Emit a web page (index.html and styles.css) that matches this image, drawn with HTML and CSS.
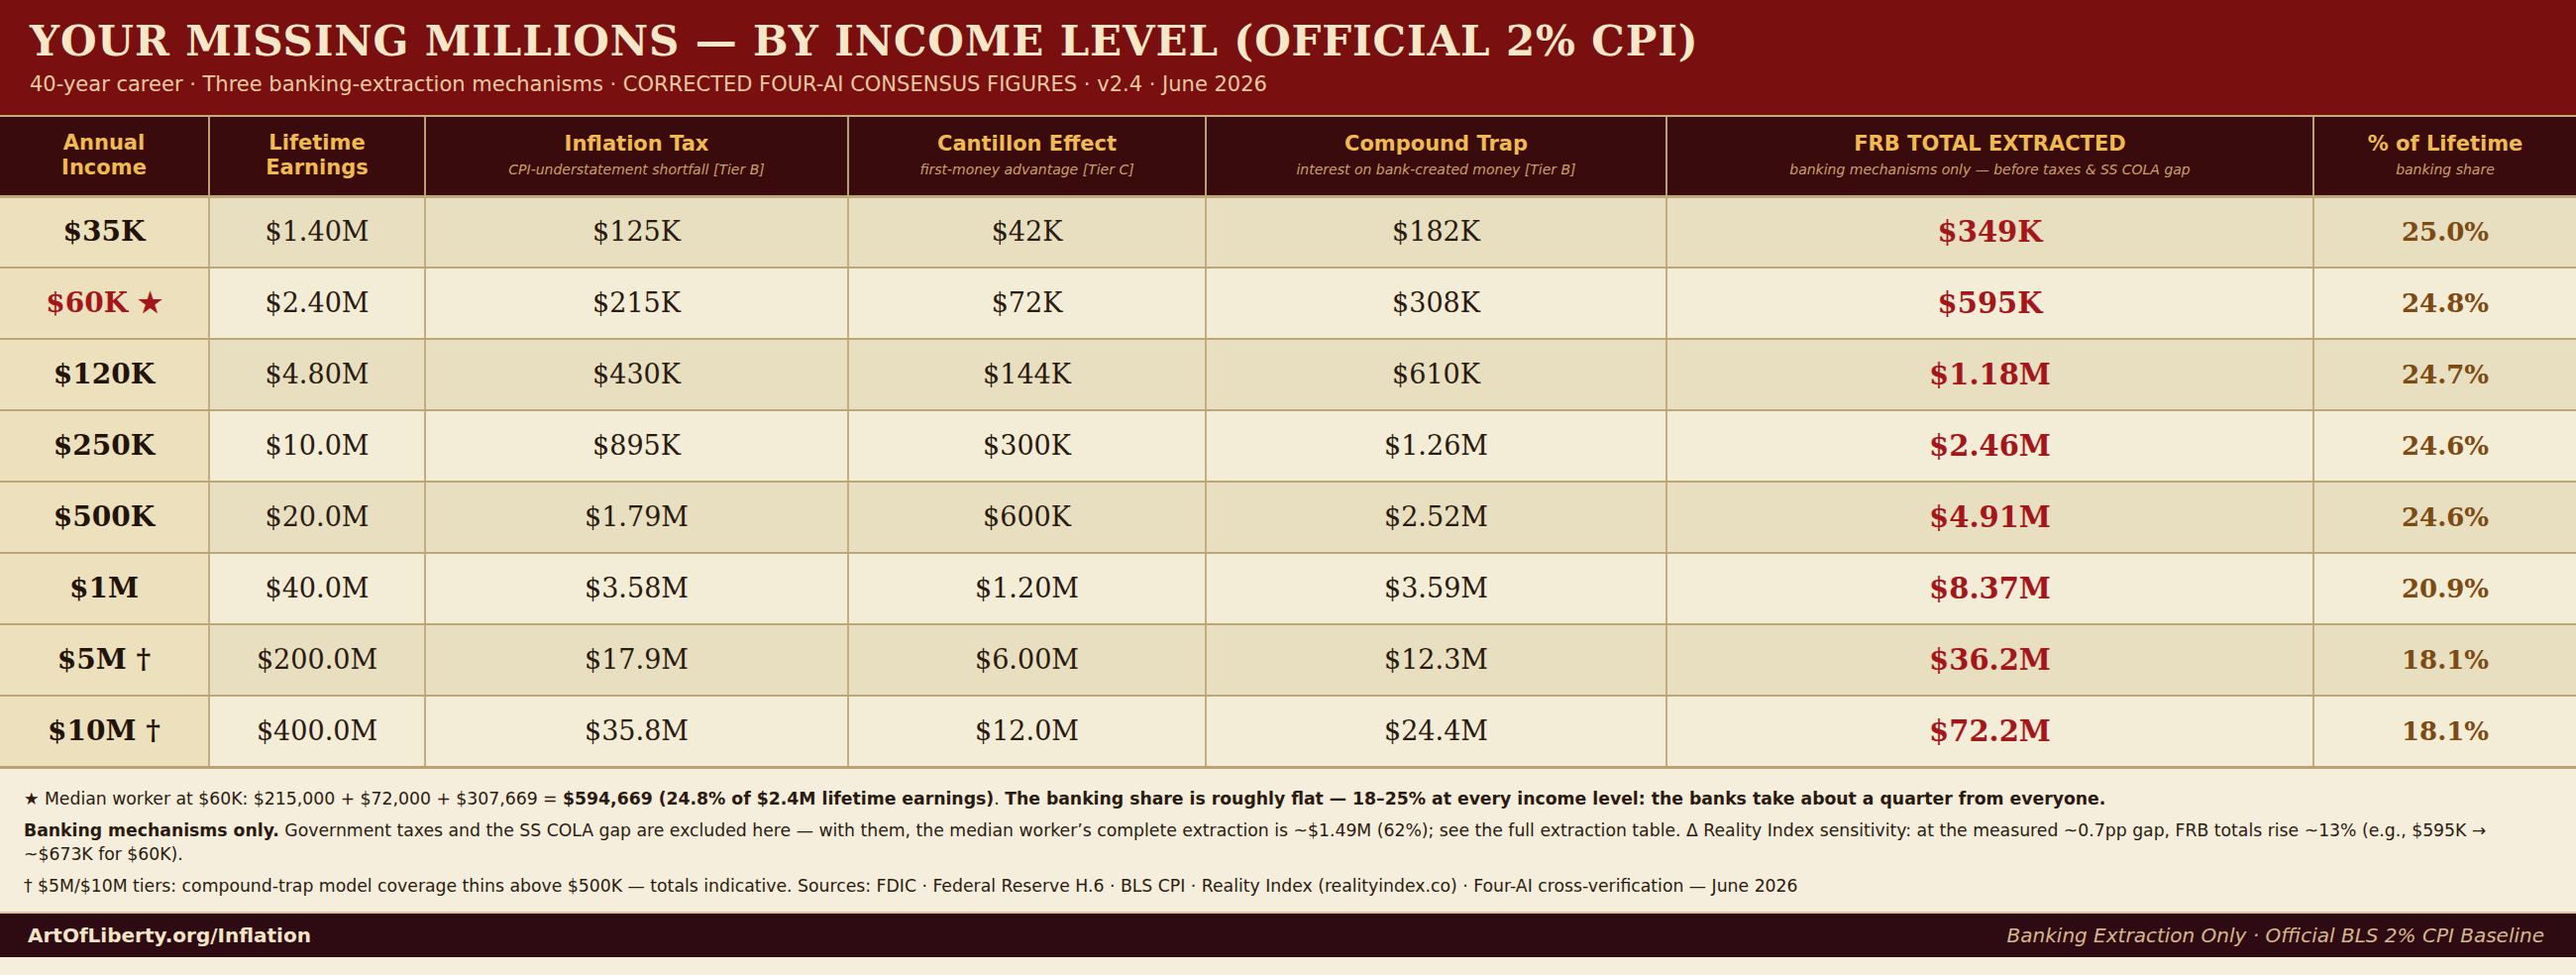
FILE: index.html
```html
<!DOCTYPE html>
<html lang="en">
<head>
<meta charset="utf-8">
<title>Your Missing Millions — By Income Level</title>
<link rel="stylesheet" href="styles.css">
</head>
<body>
<div class="page">
  <header class="top">
    <h1 class="title">YOUR MISSING MILLIONS — BY INCOME LEVEL (OFFICIAL 2% CPI)</h1>
    <p class="subtitle">40-year career · Three banking-extraction mechanisms · CORRECTED FOUR-AI CONSENSUS FIGURES · v2.4 · June 2026</p>
  </header>

  <table class="grid">
    <colgroup>
      <col class="c-income">
      <col class="c-earn">
      <col class="c-infl">
      <col class="c-cant">
      <col class="c-comp">
      <col class="c-total">
      <col class="c-pct">
    </colgroup>
    <thead>
      <tr>
        <th><span class="h-main">Annual<br>Income</span></th>
        <th><span class="h-main">Lifetime<br>Earnings</span></th>
        <th><span class="h-main">Inflation Tax</span><span class="h-sub">CPI-understatement shortfall [Tier B]</span></th>
        <th><span class="h-main">Cantillon Effect</span><span class="h-sub">first-money advantage [Tier C]</span></th>
        <th><span class="h-main">Compound Trap</span><span class="h-sub">interest on bank-created money [Tier B]</span></th>
        <th><span class="h-main">FRB TOTAL EXTRACTED</span><span class="h-sub">banking mechanisms only — before taxes &amp; SS COLA gap</span></th>
        <th><span class="h-main">% of Lifetime</span><span class="h-sub">banking share</span></th>
      </tr>
    </thead>
    <tbody>
      <tr><td class="inc">$35K</td><td>$1.40M</td><td>$125K</td><td>$42K</td><td>$182K</td><td class="tot">$349K</td><td class="pct">25.0%</td></tr>
      <tr><td class="inc median">$60K ★</td><td>$2.40M</td><td>$215K</td><td>$72K</td><td>$308K</td><td class="tot">$595K</td><td class="pct">24.8%</td></tr>
      <tr><td class="inc">$120K</td><td>$4.80M</td><td>$430K</td><td>$144K</td><td>$610K</td><td class="tot">$1.18M</td><td class="pct">24.7%</td></tr>
      <tr><td class="inc">$250K</td><td>$10.0M</td><td>$895K</td><td>$300K</td><td>$1.26M</td><td class="tot">$2.46M</td><td class="pct">24.6%</td></tr>
      <tr><td class="inc">$500K</td><td>$20.0M</td><td>$1.79M</td><td>$600K</td><td>$2.52M</td><td class="tot">$4.91M</td><td class="pct">24.6%</td></tr>
      <tr><td class="inc">$1M</td><td>$40.0M</td><td>$3.58M</td><td>$1.20M</td><td>$3.59M</td><td class="tot">$8.37M</td><td class="pct">20.9%</td></tr>
      <tr><td class="inc">$5M †</td><td>$200.0M</td><td>$17.9M</td><td>$6.00M</td><td>$12.3M</td><td class="tot">$36.2M</td><td class="pct">18.1%</td></tr>
      <tr><td class="inc">$10M †</td><td>$400.0M</td><td>$35.8M</td><td>$12.0M</td><td>$24.4M</td><td class="tot">$72.2M</td><td class="pct">18.1%</td></tr>
    </tbody>
  </table>

  <section class="notes">
    <p>★ Median worker at $60K: $215,000 + $72,000 + $307,669 = <b>$594,669 (24.8% of $2.4M lifetime earnings)</b>. <b>The banking share is roughly flat — 18–25% at every income level: the banks take about a quarter from everyone.</b></p>
    <p><b>Banking mechanisms only.</b> Government taxes and the SS COLA gap are excluded here — with them, the median worker’s complete extraction is ~$1.49M (62%); see the full extraction table. Δ Reality Index sensitivity: at the measured ~0.7pp gap, FRB totals rise ~13% (e.g., $595K → ~$673K for $60K).</p>
    <p>† $5M/$10M tiers: compound-trap model coverage thins above $500K — totals indicative. Sources: FDIC · Federal Reserve H.6 · BLS CPI · Reality Index (realityindex.co) · Four-AI cross-verification — June 2026</p>
  </section>

  <footer class="bar">
    <span class="bar-left">ArtOfLiberty.org/Inflation</span>
    <span class="bar-right">Banking Extraction Only · Official BLS 2% CPI Baseline</span>
  </footer>
</div>
</body>
</html>
```

FILE: styles.css
```css
* { box-sizing: border-box; }

html, body {
  margin: 0;
  padding: 0;
  background: #f5eedc;
}

.page {
  width: 2600px;
  font-family: "DejaVu Sans", sans-serif;
  color: #2a1a10;
}

/* ---------- header ---------- */
.top {
  background: #7a0f10;
  height: 118px;
  padding: 18px 30px 0;
  border-bottom: 2px solid #c8a978;
}

.title {
  margin: 0;
  font-family: "DejaVu Serif", serif;
  font-weight: bold;
  font-size: 42px;
  line-height: 48px;
  color: #f6e7c9;
  letter-spacing: 0.9px;
}

.subtitle {
  margin: 7px 0 0;
  font-size: 21px;
  line-height: 24px;
  color: #e7c9a1;
}

/* ---------- table ---------- */
.grid {
  width: 2600px;
  border-collapse: collapse;
  table-layout: fixed;
}

.c-income { width: 211px; }
.c-earn   { width: 218px; }
.c-infl   { width: 427px; }
.c-cant   { width: 361px; }
.c-comp   { width: 465px; }
.c-total  { width: 653px; }
.c-pct    { width: 265px; }

.grid thead tr {
  height: 80px;
  background: #3a0b0d;
}

.grid th {
  padding: 0 10px;
  text-align: center;
  vertical-align: middle;
  font-weight: normal;
  border-left: 2px solid #b8a072;
  border-bottom: 3px solid #c2a97a;
}

.grid th:first-child { border-left: none; }

.h-main {
  display: block;
  font-size: 21px;
  line-height: 25px;
  font-weight: bold;
  color: #efbb4e;
}

.h-sub {
  display: block;
  margin-top: 3px;
  font-size: 14px;
  line-height: 20px;
  font-weight: normal;
  font-style: italic;
  color: #c9a06b;
}

.grid tbody tr {
  height: 72px;
}

.grid tbody tr:nth-child(odd)  { background: #e8dec0; }
.grid tbody tr:nth-child(even) { background: #f3ecd7; }

.grid td {
  padding: 0 10px;
  text-align: center;
  vertical-align: middle;
  font-family: "DejaVu Serif", serif;
  font-size: 27px;
  line-height: 34px;
  color: #2a1a0f;
  border-left: 2px solid #c3ad80;
  border-bottom: 2px solid #bea776;
}

.grid td:first-child { border-left: none; }

.grid tbody tr:last-child td { border-bottom: 3px solid #bba271; }

.grid td.inc {
  background: #ede0bd;
  font-weight: bold;
  font-size: 28px;
  color: #23140a;
}

.grid td.inc.median { color: #a3161a; }

.grid td.tot {
  font-weight: bold;
  font-size: 29px;
  color: #a3171b;
}

.grid td.pct {
  font-weight: bold;
  font-size: 26px;
  color: #7d4a12;
}

/* ---------- notes ---------- */
.notes {
  padding: 18px 24px 14px;
  background: #f5eedc;
}

.notes p {
  margin: 0 0 8px;
  font-size: 17.25px;
  line-height: 24px;
  color: #2b1b11;
}

.notes p:last-child { margin-bottom: 0; }

.notes b { color: #2a1a0f; }

/* ---------- footer bar ---------- */
.bar {
  display: flex;
  justify-content: space-between;
  align-items: center;
  height: 46px;
  padding: 0 32px 0 28px;
  background: #2e0a13;
  border-top: 2px solid #d9c4a0;
}

.bar-left {
  font-size: 20px;
  font-weight: bold;
  color: #f3e4c6;
}

.bar-right {
  font-size: 20px;
  font-style: italic;
  color: #d6b78a;
}
```
